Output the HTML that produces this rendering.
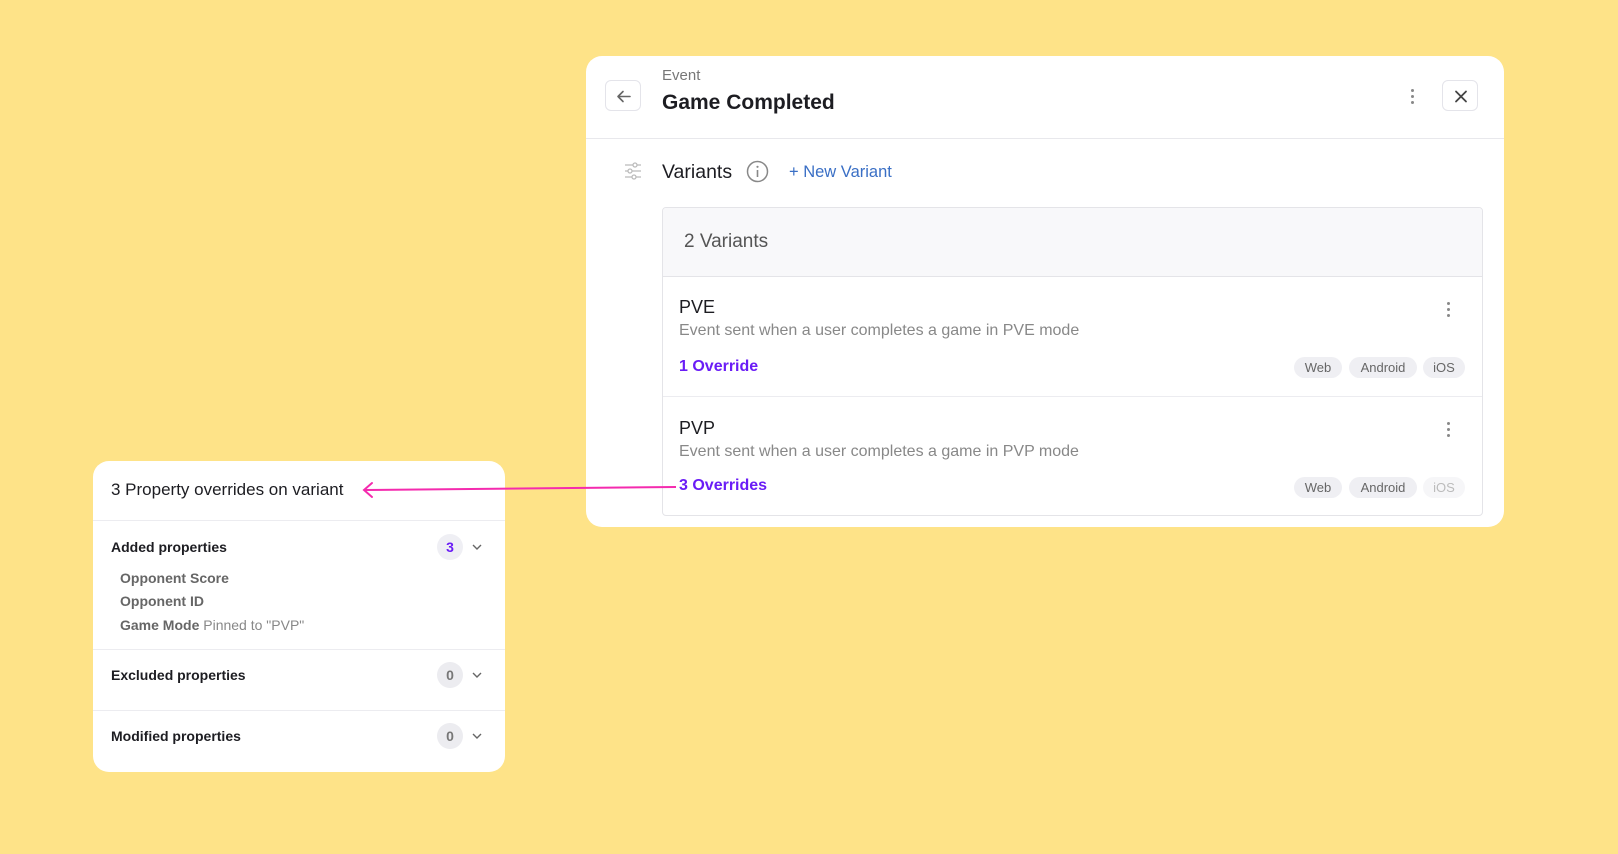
<!DOCTYPE html>
<html><head><meta charset="utf-8"><style>
*{box-sizing:border-box;margin:0;padding:0}
body{width:1618px;height:854px;background:#fee388;font-family:"Liberation Sans",sans-serif;position:relative;overflow:hidden}
.abs{position:absolute}
.card{position:absolute;background:#fff;border-radius:16px}
.btn{position:absolute;border:1px solid #e4e4ea;border-radius:6px;background:#fff}
.tag{position:absolute;height:21px;border-radius:11px;background:#efeff3;color:#666;font-size:13px;line-height:21px;text-align:center}
.badge{position:absolute;width:26px;height:26px;border-radius:13px;background:#ececf0;color:#777;font-size:14px;line-height:26px;text-align:center;font-weight:bold}
.kebab{position:absolute;width:4px}
.kebab i{display:block;width:3px;height:3px;border-radius:2px;background:#888;margin-bottom:3px}
</style></head><body>

<div class="card" style="left:586px;top:56px;width:918px;height:471px">
  <div class="btn" style="left:19px;top:24px;width:36px;height:31px">
    <svg width="36" height="31" viewBox="0 0 36 31"><path d="M24 15.5H12M17 10.5l-5 5 5 5" stroke="#666" stroke-width="1.6" fill="none" stroke-linecap="round" stroke-linejoin="round"/></svg>
  </div>
  <div class="abs" style="left:76px;top:11px;font-size:15px;color:#777">Event</div>
  <div class="abs" style="left:76px;top:35px;font-size:21px;color:#1d1d22;font-weight:bold">Game Completed</div>
  <div class="kebab" style="left:825px;top:33px"><i></i><i></i><i></i></div>
  <div class="btn" style="left:856px;top:24px;width:36px;height:31px">
    <svg width="36" height="31" viewBox="0 0 36 31"><path d="M13 10.5l10 10M23 10.5l-10 10" stroke="#444" stroke-width="1.8" stroke-linecap="round"/></svg>
  </div>
  <div class="abs" style="left:0;top:82px;width:918px;height:1px;background:#e8e8ec"></div>

  <svg class="abs" style="left:37px;top:105px" width="20" height="20" viewBox="0 0 20 20"><g stroke="#bbb" stroke-width="1.3" fill="none"><path d="M2 4h16M2 10h16M2 16h16"/><circle cx="12" cy="4" r="2" fill="#fff"/><circle cx="7" cy="10" r="2" fill="#fff"/><circle cx="11" cy="16" r="2" fill="#fff"/></g></svg>
  <div class="abs" style="left:76px;top:105px;font-size:19.5px;color:#1d1d22">Variants</div>
  <svg class="abs" style="left:160px;top:104px" width="23" height="23" viewBox="0 0 23 23"><circle cx="11.5" cy="11.5" r="10" stroke="#888" stroke-width="1.5" fill="none"/><path d="M11.5 10v7" stroke="#888" stroke-width="1.6"/><circle cx="11.5" cy="6.8" r="1.1" fill="#888"/></svg>
  <div class="abs" style="left:203px;top:107px;font-size:16.5px;color:#3a6fc5">+ New Variant</div>

  <div class="abs" style="left:76px;top:151px;width:821px;height:309px;border:1.5px solid #e4e4e8;border-radius:4px;overflow:hidden">
    <div style="height:69px;background:#f8f8fa;border-bottom:1.5px solid #e4e4e8;padding:23px 0 0 21px;font-size:19px;color:#555">2 Variants</div>
    <div style="position:relative;height:120px;border-bottom:1px solid #ececf0">
      <div class="abs" style="left:16px;top:20px;font-size:18px;color:#1d1d22">PVE</div>
      <div class="abs" style="left:16px;top:45px;font-size:16px;color:#888">Event sent when a user completes a game in PVE mode</div>
      <div class="abs" style="left:16px;top:81px;font-size:16px;color:#6a1cf6;font-weight:bold">1 Override</div>
      <div class="kebab" style="left:784px;top:25px"><i></i><i></i><i></i></div>
      <div class="tag" style="left:631px;top:80px;width:48px">Web</div>
      <div class="tag" style="left:686px;top:80px;width:68px">Android</div>
      <div class="tag" style="left:760px;top:80px;width:42px">iOS</div>
    </div>
    <div style="position:relative;height:120px">
      <div class="abs" style="left:16px;top:21px;font-size:18px;color:#1d1d22">PVP</div>
      <div class="abs" style="left:16px;top:46px;font-size:16px;color:#888">Event sent when a user completes a game in PVP mode</div>
      <div class="abs" style="left:16px;top:80px;font-size:16px;color:#6a1cf6;font-weight:bold">3 Overrides</div>
      <div class="kebab" style="left:784px;top:25px"><i></i><i></i><i></i></div>
      <div class="tag" style="left:631px;top:80px;width:48px">Web</div>
      <div class="tag" style="left:686px;top:80px;width:68px">Android</div>
      <div class="tag" style="left:760px;top:80px;width:42px;background:#f6f6f8;color:#bbb">iOS</div>
    </div>
  </div>
</div>

<div class="card" style="left:93px;top:461px;width:412px;height:311px;overflow:hidden">
  <div class="abs" style="left:18px;top:19px;font-size:17px;color:#1d1d22">3 Property overrides on variant</div>
  <div class="abs" style="left:0;top:59px;width:412px;height:1px;background:#ececf0"></div>
  <div class="abs" style="left:18px;top:78px;font-size:14px;color:#1d1d22;font-weight:bold">Added properties</div>
  <div class="badge" style="left:344px;top:73px;color:#6a1cf6;background:#efeff4">3</div>
  <svg class="abs" style="left:378px;top:80px" width="12" height="12" viewBox="0 0 12 12"><path d="M2 4l4 4 4-4" stroke="#666" stroke-width="1.4" fill="none"/></svg>
  <div class="abs" style="left:27px;top:109px;font-size:14px;color:#666;font-weight:bold">Opponent Score</div>
  <div class="abs" style="left:27px;top:132px;font-size:14px;color:#666;font-weight:bold">Opponent ID</div>
  <div class="abs" style="left:27px;top:156px;font-size:14px;color:#666"><b>Game Mode</b> <span style="color:#888">Pinned to "PVP"</span></div>
  <div class="abs" style="left:0;top:188px;width:412px;height:1px;background:#ececf0"></div>
  <div class="abs" style="left:18px;top:206px;font-size:14px;color:#1d1d22;font-weight:bold">Excluded properties</div>
  <div class="badge" style="left:344px;top:201px">0</div>
  <svg class="abs" style="left:378px;top:208px" width="12" height="12" viewBox="0 0 12 12"><path d="M2 4l4 4 4-4" stroke="#666" stroke-width="1.4" fill="none"/></svg>
  <div class="abs" style="left:0;top:249px;width:412px;height:1px;background:#ececf0"></div>
  <div class="abs" style="left:18px;top:267px;font-size:14px;color:#1d1d22;font-weight:bold">Modified properties</div>
  <div class="badge" style="left:344px;top:262px">0</div>
  <svg class="abs" style="left:378px;top:269px" width="12" height="12" viewBox="0 0 12 12"><path d="M2 4l4 4 4-4" stroke="#666" stroke-width="1.4" fill="none"/></svg>
</div>

<svg class="abs" style="left:0;top:0" width="1618" height="854"><path d="M364 490L676 487" stroke="#f42bae" stroke-width="2"/><path d="M372 483l-8 7 8 7" stroke="#f42bae" stroke-width="2" fill="none" stroke-linecap="round"/></svg>
</body></html>
